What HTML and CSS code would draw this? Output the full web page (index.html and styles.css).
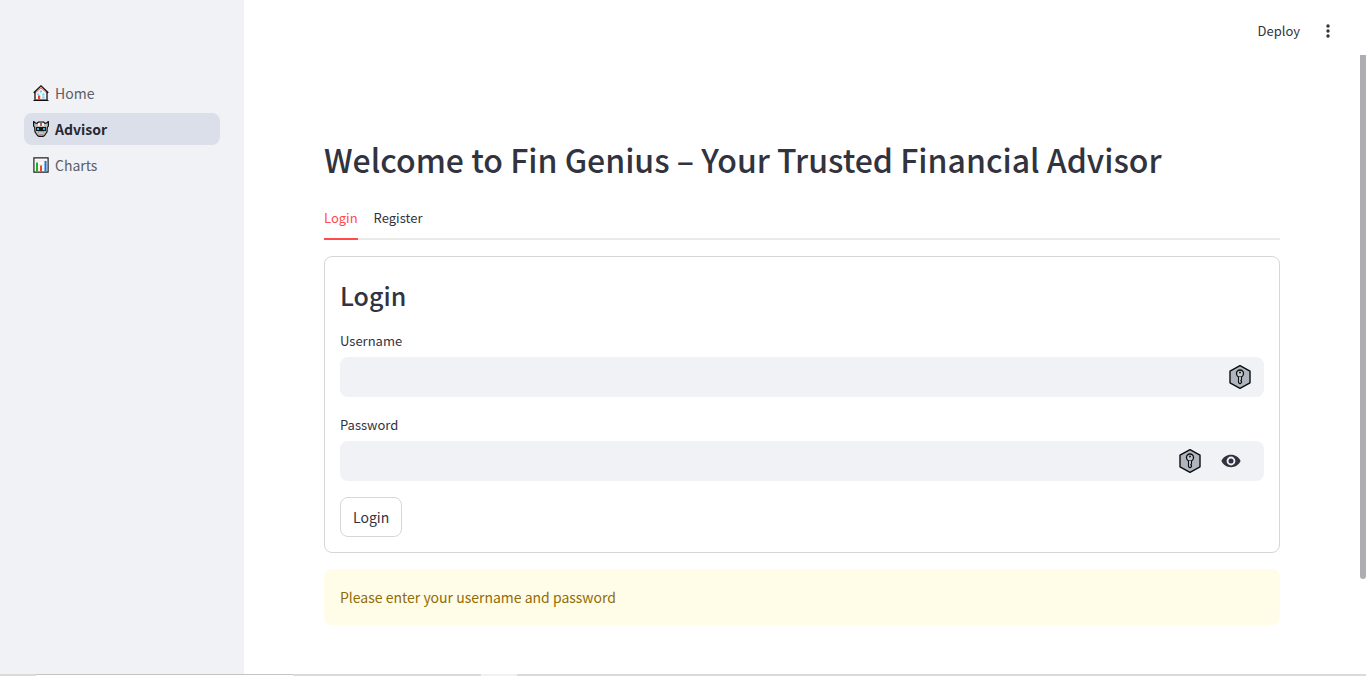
FILE: index.html
```html
<!DOCTYPE html>
<html lang="en">
<head>
<meta charset="utf-8">
<meta name="viewport" content="width=device-width, initial-scale=1">
<title>Fin Genius</title>
<link rel="stylesheet" href="styles.css">
</head>
<body>
<svg class="defs" aria-hidden="true">
  <symbol id="key" viewBox="0 0 24 26">
    <path d="M12 1.600 22 7.200v11.600l-10 5.600-10-5.600V7.200z" fill="#afb5bf" stroke="#0c0d10" stroke-width="1.400" stroke-linejoin="round"/>
    <circle cx="12" cy="9.500" r="3.500" fill="#c3c8d0" stroke="#0c0d10" stroke-width="1.300"/>
    <circle cx="12" cy="8.500" r=".9" fill="#0c0d10"/>
    <path d="M10.500 12.800v5.700l1.500 1.300 1.500-1.300v-1l-.8-.8.8-.9v-3" fill="#c3c8d0" stroke="#0c0d10" stroke-width="1.100" stroke-linejoin="round"/>
  </symbol>
</svg>
<div class="app">
  <aside class="sidebar">
    <nav class="nav" aria-label="Pages">
      <a class="nav-link" href="#home">
        <svg class="nav-icon" viewBox="0 0 16 16" aria-hidden="true">
          <path d="M2.500 7 8 2l5.500 5v7.500h-11z" fill="#f8f8f8"/>
          <path d="M2.500 7.800 8 2.800l5.500 5" fill="none" stroke="#ee4b35" stroke-width="1"/>
          <path d="M7 5.500h2v2H7zm-2.700 3h1.900v1.700H4.300zm5 0h2.200v2H9.300zm0 3h2.200v2H9.300z" fill="#61d3f5"/>
          <path d="M5 10.500h2.200v4H5z" fill="#e8452e"/>
          <path d="M1 14h14v1.200H1z" fill="#18b718"/>
          <path d="M.7 7.800 8 .9l7.300 6.900M2 7v7.500M14 7v7.500" fill="none" stroke="#111" stroke-width="1.300"/>
          <path d="M.500 15.500h15" stroke="#111"/>
        </svg>
        <span>Home</span>
      </a>
      <a class="nav-link active" href="#advisor" aria-current="page">
        <svg class="nav-icon" viewBox="0 0 16 16" aria-hidden="true">
          <path d="M.600.600 2.500 2l1.500.3L5.500 1h5L12 2.300l1.500-.3L15.400.600V5l-1.100 1.500-.3 4.500-2.500 3.500-1.500.900H6l-1.500-.900L2 11l-.3-4.500L.600 5z" fill="#bcbcbc" stroke="#111" stroke-width="1.200" stroke-linejoin="round"/>
          <path d="M5 2h6v3H5z" fill="#f4f4f4"/>
          <path d="M7 2h2v3H7z" fill="#f04a28"/>
          <path d="M3 6h10v4H3z" fill="#151515"/>
          <path d="M4 7h2v2H4zm6 0h2v2h-2z" fill="#34b8e3"/>
          <path d="M5 11h6M6 13h4" stroke="#777"/>
          <path d="M6 12h4" stroke="#f0f0f0"/>
        </svg>
        <span>Advisor</span>
      </a>
      <a class="nav-link" href="#charts">
        <svg class="nav-icon" viewBox="0 0 16 16" aria-hidden="true">
          <path d="M.900.900h14.200v14.200H.900z" fill="#fafafa" stroke="#222" stroke-width="1.200"/>
          <path d="M2 4h12M2 8h12M2 12h12" stroke="#dedede" stroke-width=".7"/>
          <path d="M3 5.500h2v9H3z" fill="#18b718"/>
          <path d="M7 8.500h2v6H7z" fill="#ea4630"/>
          <path d="M11.500 4h2v10.500h-2z" fill="#1477d4"/>
        </svg>
        <span>Charts</span>
      </a>
    </nav>
  </aside>
  <div class="page">
    <header class="toolbar">
      <button class="deploy" type="button">Deploy</button>
      <button class="menu" type="button" aria-label="Main menu">
        <svg class="dots" viewBox="0 0 4 16" aria-hidden="true">
          <circle cx="2" cy="3" r="1.700"/><circle cx="2" cy="8" r="1.700"/><circle cx="2" cy="13" r="1.700"/>
        </svg>
      </button>
    </header>
    <main class="content">
      <h1 class="title">Welcome to Fin Genius – Your Trusted Financial Advisor</h1>
      <div class="tabs" role="tablist">
        <button class="tab selected" type="button" role="tab" aria-selected="true">Login</button>
        <button class="tab" type="button" role="tab" aria-selected="false">Register</button>
      </div>
      <form class="card">
        <h2 class="subtitle">Login</h2>
        <label class="label" for="username">Username</label>
        <div class="field">
          <input class="input" id="username" type="text">
          <svg class="key" aria-hidden="true"><use href="#key"/></svg>
        </div>
        <label class="label" for="password">Password</label>
        <div class="field">
          <input class="input" id="password" type="password">
          <svg class="key" aria-hidden="true"><use href="#key"/></svg>
          <button class="reveal" type="button" aria-label="Show password">
            <svg class="eye" viewBox="0 0 20 14" aria-hidden="true">
              <path fill-rule="evenodd" d="M10 .8C5.700.800 2 3.300.4 7 2 10.700 5.700 13.200 10 13.200s8-2.500 9.600-6.200C18 3.300 14.300.800 10 .8zM10 2.600a4.400 4.400 0 1 1 0 8.800 4.400 4.400 0 0 1 0-8.800z"/>
              <circle cx="10" cy="7" r="2.500"/>
            </svg>
          </button>
        </div>
        <button class="submit" type="submit">Login</button>
      </form>
      <div class="alert" role="alert">Please enter your username and password</div>
    </main>
    <div class="scroll-thumb"></div>
  </div>
</div>
<footer class="strip"><span class="strip-tab"></span><span class="strip-gap"></span></footer>
</body>
</html>
```

FILE: styles.css
```css
* { box-sizing: border-box; }

body {
  margin: 0;
  min-height: 100vh;
  display: flex;
  flex-direction: column;
  background: #fff;
  color: #31333f;
  font: 14px/24px "Source Sans Pro", "Noto Sans CJK SC", "Noto Sans", sans-serif;
}

button, input { font: inherit; color: inherit; }
button { border: 0; padding: 0; background: none; cursor: pointer; }

.defs { position: absolute; width: 0; height: 0; }

.app { flex: 1; display: flex; }

.sidebar {
  flex: 0 0 244px;
  padding: 77px 24px 24px;
  background: #f0f2f6;
}
.nav { display: flex; flex-direction: column; gap: 4px; }
.nav-link {
  display: flex;
  align-items: center;
  gap: 6px;
  height: 32px;
  padding: 0 9px;
  border-radius: 8px;
  color: #5b5d69;
  text-decoration: none;
}
.nav-link.active { background: #dbdfe9; color: #262730; font-weight: 600; }
.nav-icon { width: 16px; height: 16px; }

.page { flex: 1; min-width: 0; position: relative; }
.toolbar {
  display: flex;
  justify-content: flex-end;
  align-items: center;
  gap: 16px;
  height: 62px;
  padding-right: 26px;
}
.deploy { font-size: 13px; }
.menu { display: flex; justify-content: center; width: 24px; }
.dots { width: 4px; height: 16px; fill: #31333f; }

.content { padding: 75px 86px 48px 80px; }
.title { margin: 0; font-size: 32px; line-height: 44px; font-weight: 500; }

.tabs {
  display: flex;
  gap: 16px;
  margin-top: 17px;
  border-bottom: 2px solid #eaeaeb;
}
.tab {
  height: 42px;
  margin-bottom: -2px;
  border-bottom: 2px solid transparent;
  font-size: 13px;
}
.tab.selected { color: #ff4b4b; border-color: #ff4b4b; }

.card {
  display: flex;
  flex-direction: column;
  margin-top: 16px;
  padding: 15px;
  border: 1px solid #d6d6d9;
  border-radius: 8px;
}
.subtitle { margin: 7px 0 9px; font-size: 25px; line-height: 32px; font-weight: 500; }
.label { margin-top: 11px; font-size: 13px; line-height: 20px; }
.field {
  display: flex;
  align-items: center;
  height: 40px;
  margin: 6px 0 7px;
  padding-right: 12px;
  border-radius: 8px;
  background: #f0f2f6;
}
.input {
  flex: 1;
  min-width: 0;
  height: 40px;
  padding: 0 12px;
  border: 0;
  background: none;
  outline: 0;
}
.key { width: 24px; height: 26px; }
.reveal { display: flex; margin: 0 11px 0 19px; }
.eye { width: 20px; height: 14px; fill: #31333f; }
.submit {
  align-self: flex-start;
  height: 40px;
  margin-top: 9px;
  padding: 0 12px;
  border: 1px solid #d6d6d9;
  border-radius: 8px;
}

.alert {
  margin-top: 16px;
  padding: 16px;
  border-radius: 8px;
  background: #fffce7;
  color: #926c05;
}

.scroll-thumb {
  position: absolute;
  top: 55px;
  right: 0;
  bottom: 95px;
  width: 6px;
  border-radius: 0 0 3px 3px;
  background: #adadb2;
}

.strip { display: flex; height: 2px; background: #dadada; }
.strip-tab { width: 257px; margin-left: 36px; border-top: 1px solid #c4c4c4; background: #fff; }
.strip-gap { width: 36px; margin-left: 188px; background: #f1f1f1; }
```
